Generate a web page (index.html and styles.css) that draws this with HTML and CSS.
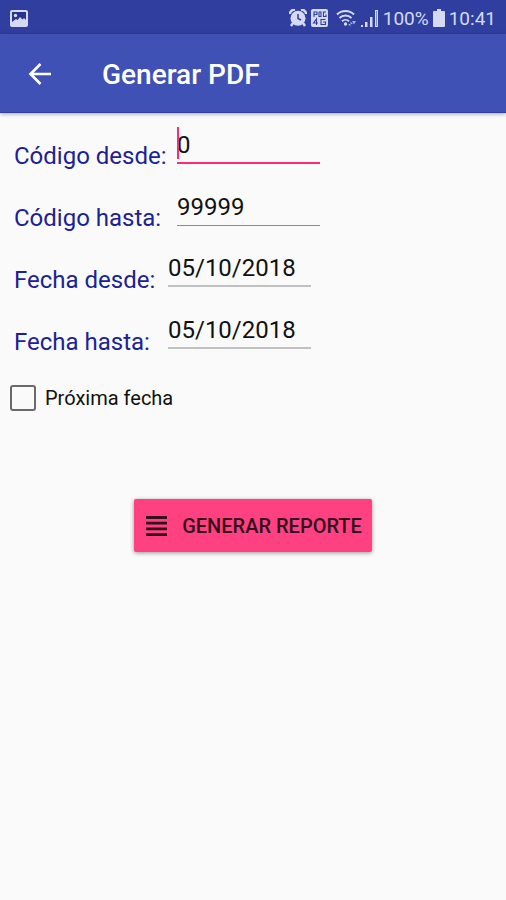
FILE: index.html
```html
<!DOCTYPE html>
<html lang="es">
<head>
<meta charset="utf-8">
<meta name="viewport" content="width=device-width, initial-scale=1">
<title>Generar PDF</title>
<link rel="stylesheet" href="styles.css">
</head>
<body>

<div class="statusbar">
  <svg class="picture" width="18" height="17" viewBox="0 0 18 17">
    <rect width="18" height="17" rx="2" fill="#d5daf2"/>
    <path d="M2 2h14v8l-2-2-1.500 1.500L10 7l-2.500 3L6 9l-4 3z" fill="#26348f"/>
    <circle cx="5.500" cy="5.500" r="1.700" fill="#d5daf2"/>
  </svg>
  <div class="status-icons">
    <svg width="18" height="18" viewBox="0 0 18 18">
      <path d="M1 5a4 4 0 0 1 5-4M17 5a4 4 0 0 0-5-4M4 14l-2 3M14 14l2 3" stroke="#d5daf2" stroke-width="2.400" fill="none"/>
      <circle cx="9" cy="9.200" r="7.500" fill="#d5daf2"/>
      <path d="M9 5v4.500l3 1.500" stroke="#303f9f" stroke-width="1.500" fill="none"/>
    </svg>
    <svg width="17" height="18" viewBox="0 0 17 18">
      <rect width="17" height="18" rx="2" fill="#d5daf2"/>
      <path d="M3 8V3h3v2.500H3M8 3v4.500h2V3H8M15 3h-2.500v4.500H15V5.500M5.500 16v-6L2.500 14h4.500M14.500 10.500H10v5h4.500V13H12" stroke="#303f9f" stroke-width="1.100" fill="none"/>
    </svg>
    <svg class="wifi" width="21" height="18" viewBox="0 0 21 18">
      <path d="M1 5.500a12 12 0 0 1 17 0M3.500 9a8.500 8.500 0 0 1 12 0M6 12.300a5 5 0 0 1 7 0" stroke="#d5daf2" stroke-width="1.900" fill="none"/>
      <circle cx="9.500" cy="15" r="1.700" fill="#d5daf2"/>
      <path d="M14.500 12.500v5l-2.500-2.500h5zM18 15.500l-2-3.500h4z" fill="#a4aedd"/>
    </svg>
    <svg width="18" height="18" viewBox="0 0 18 18">
      <path d="M0 16h2v2H0zM4 13h2.500v5H4zM9 8h2.500v10H9zM14 1h3v17h-3z" fill="#d5daf2"/>
      <path d="M15.500 2v15" stroke="#7f8cca" stroke-width="1"/>
    </svg>
    <span class="percent">100%</span>
    <svg class="battery" width="12" height="18" viewBox="0 0 12 18">
      <path d="M4 0h4v2h3a1 1 0 0 1 1 1v14a1 1 0 0 1-1 1H1a1 1 0 0 1-1-1V3a1 1 0 0 1 1-1h3z" fill="#d5daf2"/>
    </svg>
    <span class="clock">10:41</span>
  </div>
</div>

<header class="toolbar">
  <button class="back" type="button" aria-label="Volver">
    <svg width="24" height="24" viewBox="0 0 24 24">
      <path d="M23 12H2.500M12.500 2L2.500 12l10 10" stroke="#fff" stroke-width="2.600" fill="none"/>
    </svg>
  </button>
  <h1>Generar PDF</h1>
</header>

<form class="content">
  <div class="row codigo">
    <label for="codDesde">Código desde:</label>
    <div class="field active"><input type="text" id="codDesde" value="0"><span class="cursor"></span></div>
  </div>
  <div class="row codigo">
    <label for="codHasta">Código hasta:</label>
    <div class="field"><input type="text" id="codHasta" value="99999"></div>
  </div>
  <div class="row fecha">
    <label for="fechaDesde">Fecha desde:</label>
    <div class="field"><input type="text" id="fechaDesde" value="05/10/2018"></div>
  </div>
  <div class="row fecha">
    <label for="fechaHasta">Fecha hasta:</label>
    <div class="field"><input type="text" id="fechaHasta" value="05/10/2018"></div>
  </div>

  <div class="check">
    <input type="checkbox" id="proxima">
    <label for="proxima">Próxima fecha</label>
  </div>

  <button class="report" type="button">
    <svg width="21" height="20" viewBox="0 0 21 20">
      <path d="M0 1.500h21M0 7.200h21M0 12.900h21M0 18.600h21" stroke="#33101c" stroke-width="2.800"/>
    </svg>
    Generar reporte
  </button>
</form>

</body>
</html>
```

FILE: styles.css
```css
* {
  box-sizing: border-box;
}

body {
  margin: 0;
  background: #fafafa;
  font-family: Roboto, sans-serif;
  color: #111;
}

.statusbar {
  display: flex;
  justify-content: space-between;
  align-items: center;
  height: 34px;
  padding: 2px 10px 0;
  background: #303f9f;
  color: #d5daf2;
  font-size: 19px;
}

.status-icons {
  display: flex;
  align-items: center;
  gap: 4px;
}

.wifi {
  margin-left: 4px;
}

.toolbar {
  display: flex;
  align-items: center;
  height: 79px;
  padding: 2px 28px 0;
  background: #3f51b5;
  border-bottom: 1px solid #303f9f;
  box-shadow: 0 1px 4px rgba(0, 0, 0, 0.35);
}

.back {
  display: flex;
  padding: 0;
  border: 0;
  background: none;
}

.toolbar h1 {
  margin: 0 0 0 50px;
  font-size: 28px;
  font-weight: 500;
  color: #fff;
}

.content {
  display: flex;
  flex-direction: column;
  padding: 10px;
}

.row {
  display: flex;
  height: 62px;
  padding-left: 4px;
}

.row label {
  padding-top: 19px;
  font-size: 24px;
  line-height: 28px;
  color: #1c2293;
}

.codigo label {
  width: 163px;
}

.fecha label {
  width: 154px;
}

.field {
  position: relative;
  width: 143px;
}

.field input {
  display: block;
  width: 100%;
  height: 40px;
  padding: 4px 0 0;
  border: 0;
  border-bottom: 1px solid #8c8c8c;
  outline: none;
  background: none;
  font: 24px Roboto, sans-serif;
  color: #111;
}

.codigo input {
  height: 41px;
}

.fecha input {
  border-bottom: 2px solid #c0c0c0;
}

.active input {
  border-bottom: 2px solid #ff2b70;
}

/* text caret */
.cursor {
  position: absolute;
  left: 0;
  top: 4px;
  width: 2px;
  height: 32px;
  background: #ff2b70;
}

.check {
  display: flex;
  align-items: center;
  gap: 9px;
  margin-top: 14px;
  font-size: 20px;
}

.check input {
  appearance: none;
  width: 26px;
  height: 26px;
  margin: 0;
  border: 2px solid #6a6a6a;
  border-radius: 3px;
}

.report {
  display: flex;
  align-items: center;
  align-self: center;
  gap: 15px;
  height: 53px;
  margin-top: 88px;
  padding: 1px 10px 0 12px;
  border: 0;
  border-radius: 2px;
  background: #ff4081;
  box-shadow: 0 1px 4px rgba(0, 0, 0, 0.4);
  font: 500 20px Roboto, sans-serif;
  text-transform: uppercase;
  color: #33101c;
}
```
